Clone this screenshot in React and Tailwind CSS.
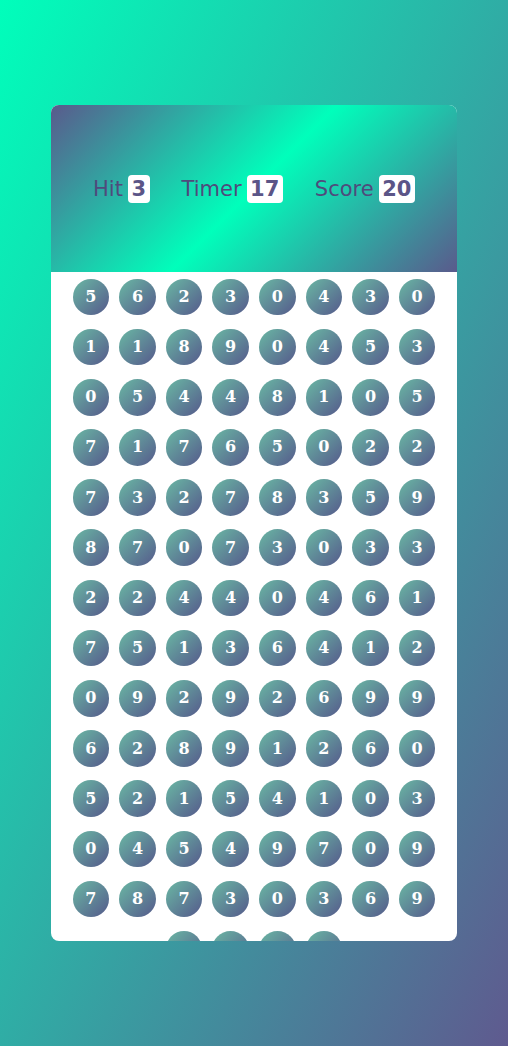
import React from "react";

const rows = [
  [5, 6, 2, 3, 0, 4, 3, 0],
  [1, 1, 8, 9, 0, 4, 5, 3],
  [0, 5, 4, 4, 8, 1, 0, 5],
  [7, 1, 7, 6, 5, 0, 2, 2],
  [7, 3, 2, 7, 8, 3, 5, 9],
  [8, 7, 0, 7, 3, 0, 3, 3],
  [2, 2, 4, 4, 0, 4, 6, 1],
  [7, 5, 1, 3, 6, 4, 1, 2],
  [0, 9, 2, 9, 2, 6, 9, 9],
  [6, 2, 8, 9, 1, 2, 6, 0],
  [5, 2, 1, 5, 4, 1, 0, 3],
  [0, 4, 5, 4, 9, 7, 0, 9],
  [7, 8, 7, 3, 0, 3, 6, 9],
  [4, 2, 6, 1],
];

const bubbles = rows.flat();

function Stat({ label, value }) {
  return (
    <div className="flex items-center gap-[5px]">
      <span className="text-[21px] text-[#4f4b7c]">{label}</span>
      <span className="bg-white rounded-[4px] px-[3.5px] py-[2px] leading-[24px] text-[21px] font-bold text-[#5b5587]">
        {value}
      </span>
    </div>
  );
}

export default function App() {
  return (
    <div className="h-screen w-full flex items-center justify-center bg-[linear-gradient(to_bottom_right,#00ffbb,#5f5a8f)] font-['DejaVu_Sans',sans-serif]">
      <div className="w-[80%] h-[80%] bg-white rounded-[8px] overflow-hidden flex flex-col">
        {/* top bar */}
        <div className="h-[20%] shrink-0 flex items-center justify-center gap-[32px] pt-[2px] bg-[linear-gradient(135deg,#5a5a8c,#00ffbb,#5a5a8c)]">
          <Stat label="Hit" value="3" />
          <Stat label="Timer" value="17" />
          <Stat label="Score" value="20" />
        </div>

        {/* bubble panel */}
        <div className="h-[80%] flex flex-wrap justify-center content-start gap-x-[10px] gap-y-[13.6px] pt-[6.6px]">
          {bubbles.map((n, i) => (
            <div
              key={i}
              className="w-[36.6px] h-[36.6px] rounded-full flex items-center justify-center bg-[linear-gradient(135deg,#6ab8a4,#55598b)] text-white font-bold text-[16px] font-['DejaVu_Serif',serif]"
            >
              {n}
            </div>
          ))}
        </div>
      </div>
    </div>
  );
}
